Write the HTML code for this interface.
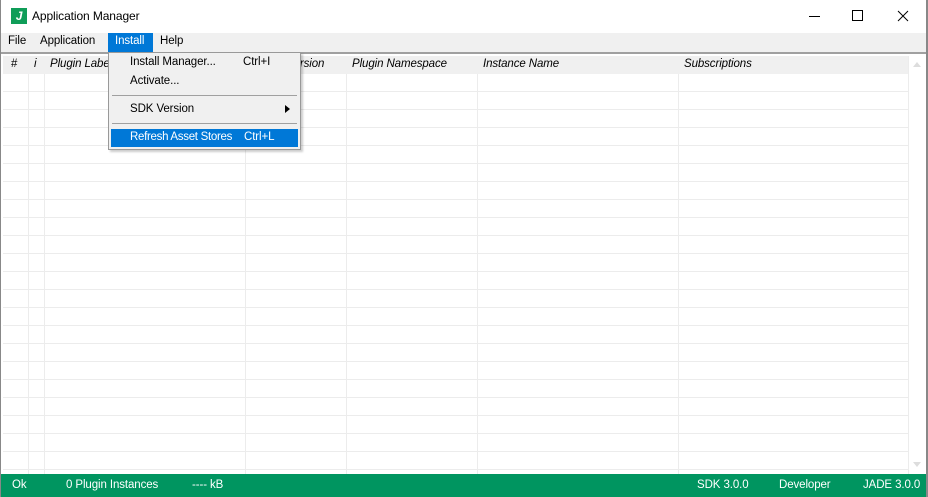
<!DOCTYPE html>
<html><head><style>
body{margin:0;width:928px;height:497px;overflow:hidden;background:#fff;font-family:"Liberation Sans",sans-serif;font-size:11.5px;color:#000;position:relative;letter-spacing:-0.1px}
.abs{position:absolute}
</style></head><body>
<div class="abs" style="left:0;top:0;width:1px;height:497px;background:#888"></div>
<div class="abs" style="right:0;top:0;width:2px;height:497px;background:#888"></div>
<div class="abs" style="left:11px;top:8px;width:16px;height:16px;background:#0f9d58;color:#fff;font-weight:bold;font-size:12px;line-height:16px;text-align:center;font-style:italic">J</div>
<div class="abs" style="left:32px;top:9px;font-size:12px">Application Manager</div>
<div class="abs" style="left:809px;top:16px;width:11px;height:1px;background:#000"></div>
<div class="abs" style="left:852px;top:10px;width:9px;height:9px;border:1px solid #000"></div>
<svg class="abs" style="left:897px;top:10px" width="12" height="12"><path d="M1 1L11 11M11 1L1 11" stroke="#000" stroke-width="1"/></svg>
<div class="abs" style="left:1px;top:33px;width:925px;height:19px;background:#f0f0f0"></div>
<div class="abs" style="left:8px;top:35px">File</div>
<div class="abs" style="left:40px;top:35px">Application</div>
<div class="abs" style="left:108px;top:33px;width:45px;height:19px;background:#0078d7"></div>
<div class="abs" style="left:115px;top:35px;color:#fff">Install</div>
<div class="abs" style="left:160px;top:35px">Help</div>
<div class="abs" style="left:1px;top:52px;width:925px;height:2px;background:#a0a0a0"></div>
<div class="abs" style="left:3px;top:56px;width:905px;height:18px;background:#f0f0f0"></div>
<div class="abs" style="left:3px;top:74px;width:905px;height:400px;background:repeating-linear-gradient(to bottom,#fff 0,#fff 17px,#ececec 17px,#ececec 18px)"></div>
<div class="abs" style="left:28px;top:74px;width:1px;height:400px;background:#ececec"></div>
<div class="abs" style="left:44px;top:74px;width:1px;height:400px;background:#ececec"></div>
<div class="abs" style="left:245px;top:74px;width:1px;height:400px;background:#ececec"></div>
<div class="abs" style="left:346px;top:74px;width:1px;height:400px;background:#ececec"></div>
<div class="abs" style="left:477px;top:74px;width:1px;height:400px;background:#ececec"></div>
<div class="abs" style="left:678px;top:74px;width:1px;height:400px;background:#ececec"></div>
<div class="abs" style="left:908px;top:56px;width:1px;height:418px;background:#ececec"></div>
<div class="abs" style="left:913px;top:62px;width:0;height:0;border-left:4px solid transparent;border-right:4px solid transparent;border-bottom:5px solid #ddd"></div>
<div class="abs" style="left:913px;top:462px;width:0;height:0;border-left:4px solid transparent;border-right:4px solid transparent;border-top:5px solid #ddd"></div>
<div class="abs" style="top:58px;left:11px">#</div>
<div class="abs" style="top:58px;left:34px;font-style:italic">i</div>
<div class="abs" style="top:58px;left:50px;font-style:italic">Plugin Label</div>
<div class="abs" style="top:58px;left:252px;font-style:italic">Plugin Version</div>
<div class="abs" style="top:58px;left:352px;font-style:italic">Plugin Namespace</div>
<div class="abs" style="top:58px;left:483px;font-style:italic">Instance Name</div>
<div class="abs" style="top:58px;left:684px;font-style:italic">Subscriptions</div>
<div class="abs" style="left:108px;top:52px;width:191px;height:96px;background:#f0f0f0;border:1px solid #999;box-shadow:2px 2px 2px rgba(0,0,0,.2)"></div>
<div class="abs" style="left:130px;top:56px">Install Manager...</div>
<div class="abs" style="left:243px;top:56px">Ctrl+I</div>
<div class="abs" style="left:130px;top:75px">Activate...</div>
<div class="abs" style="left:112px;top:95px;width:185px;height:1px;background:#a0a0a0"></div>
<div class="abs" style="left:130px;top:103px">SDK Version</div>
<div class="abs" style="left:285px;top:105px;width:0;height:0;border-top:4px solid transparent;border-bottom:4px solid transparent;border-left:5px solid #000"></div>
<div class="abs" style="left:112px;top:123px;width:185px;height:1px;background:#a0a0a0"></div>
<div class="abs" style="left:111px;top:129px;width:187px;height:18px;background:#0078d7"></div>
<div class="abs" style="left:130px;top:131px;color:#fff;letter-spacing:-0.3px">Refresh Asset Stores</div>
<div class="abs" style="left:244px;top:131px;color:#fff">Ctrl+L</div>
<div class="abs" style="left:1px;top:474px;width:925px;height:23px;background:#009560"></div>
<div class="abs" style="left:12px;top:479px;color:#fff">Ok</div>
<div class="abs" style="left:66px;top:479px;color:#fff">0 Plugin Instances</div>
<div class="abs" style="left:192px;top:479px;color:#fff">---- kB</div>
<div class="abs" style="left:697px;top:479px;color:#fff">SDK 3.0.0</div>
<div class="abs" style="left:779px;top:479px;color:#fff">Developer</div>
<div class="abs" style="left:863px;top:479px;color:#fff">JADE 3.0.0</div>
</body></html>
